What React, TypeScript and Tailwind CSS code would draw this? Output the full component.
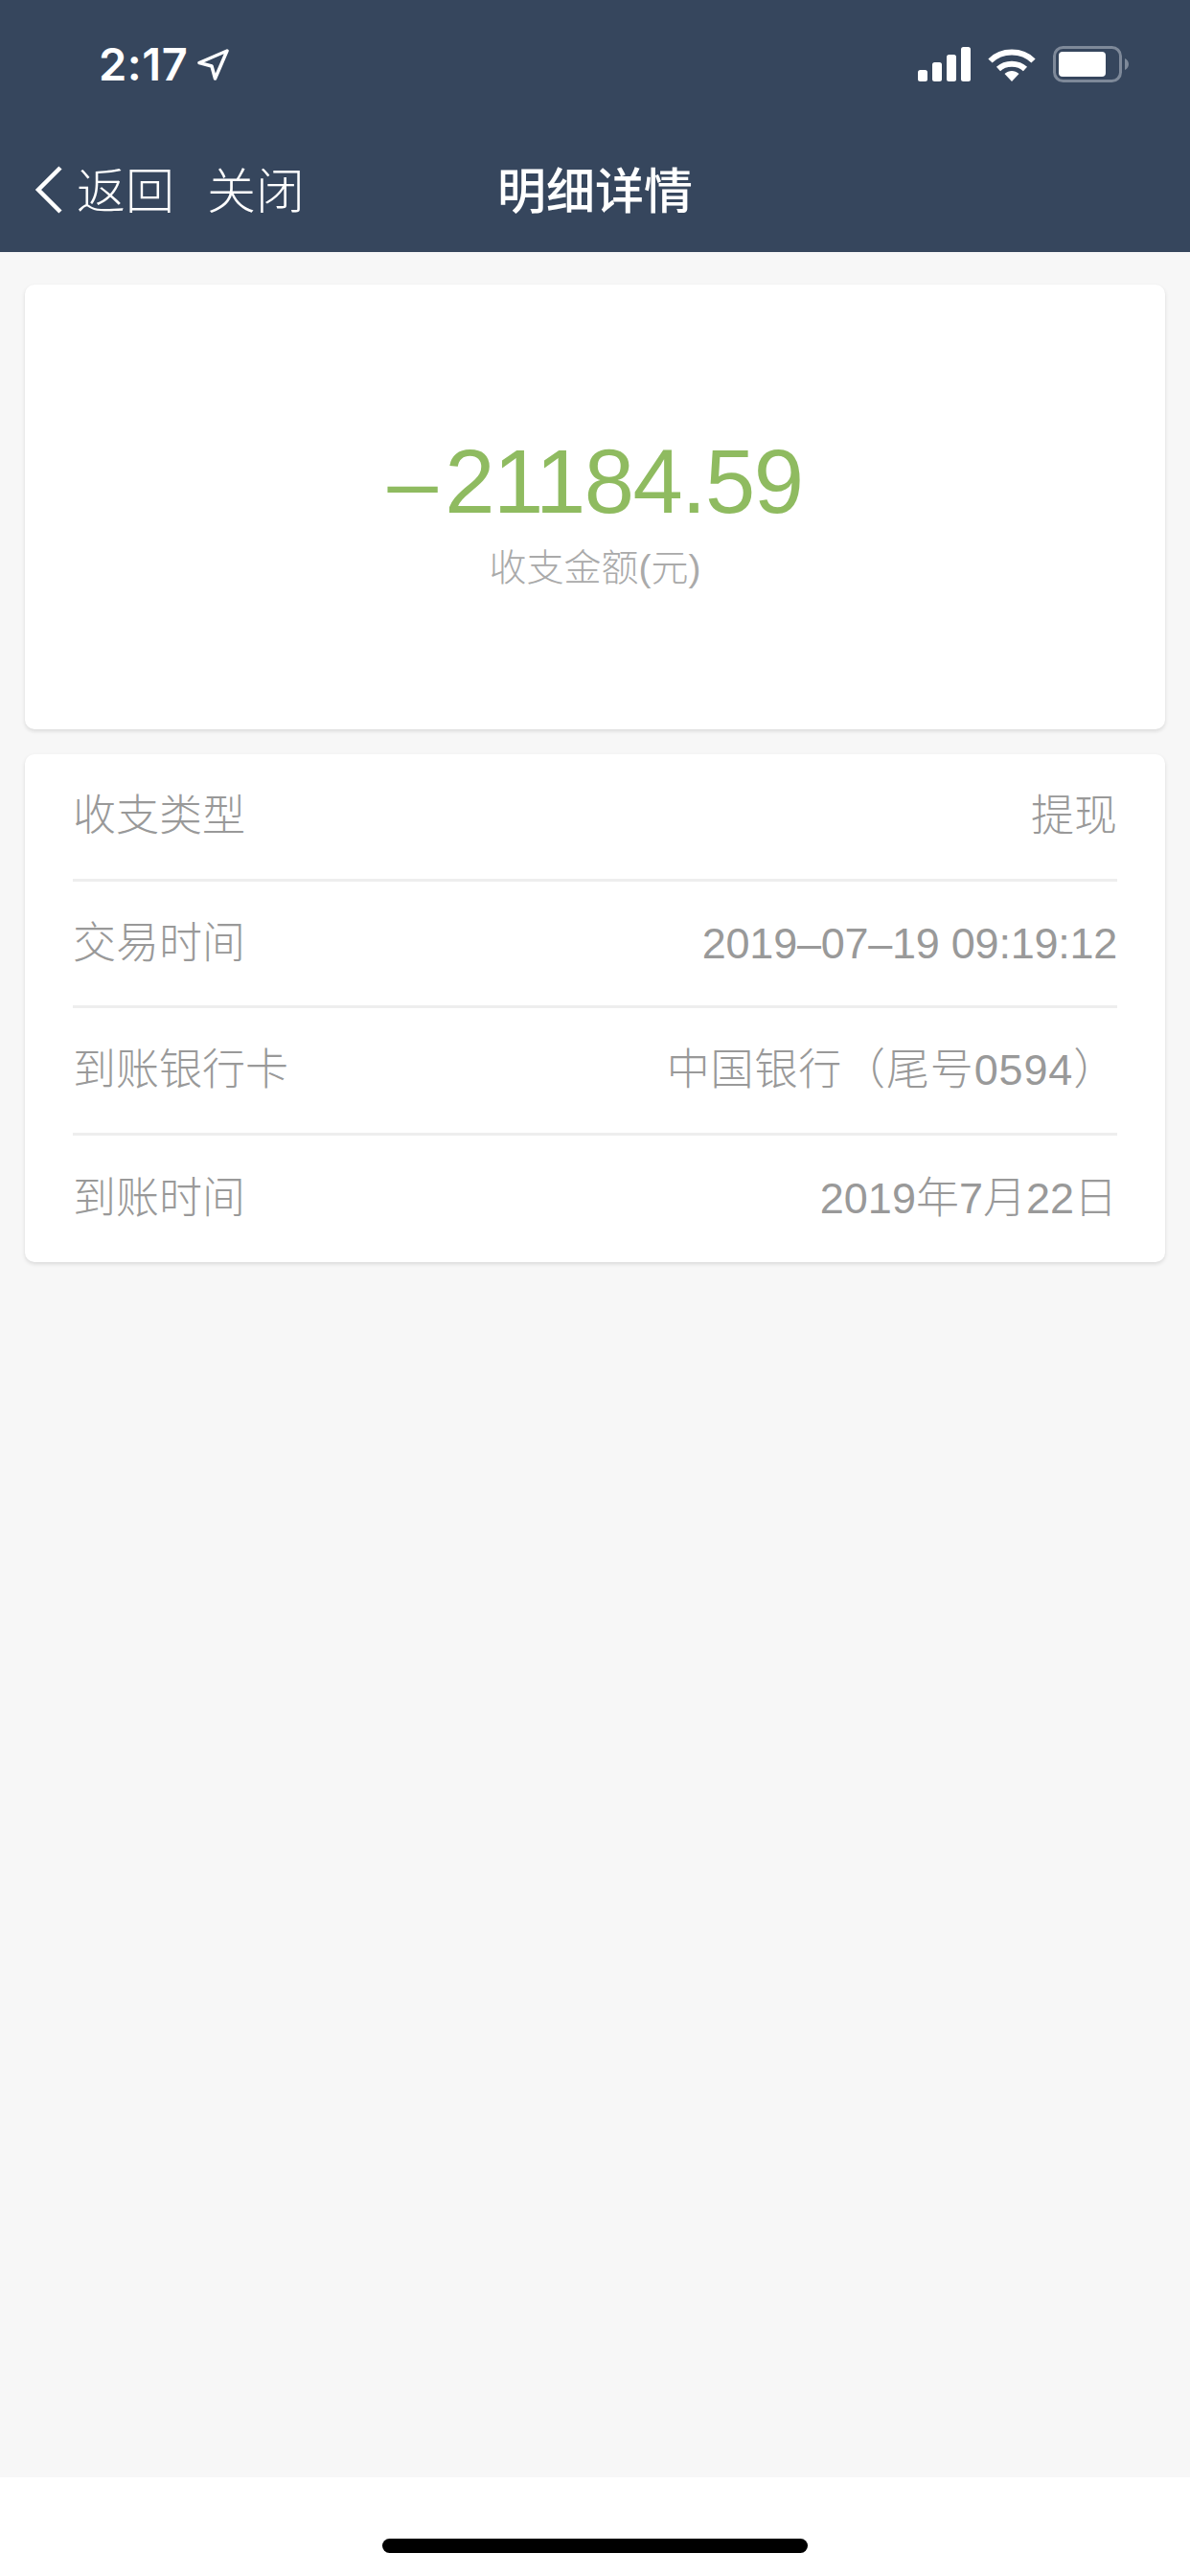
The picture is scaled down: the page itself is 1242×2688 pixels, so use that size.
const cjk = "font-['Helvetica','Liberation_Sans','Noto_Sans_CJK_SC',sans-serif]";

const rows = [
  { label: '收支类型', value: '提现', valueClass: '' },
  { label: '交易时间', value: '2019–07–19 09:19:12', valueClass: 'tracking-[-0.25px]' },
  { label: '到账银行卡', value: '中国银行（尾号0594）', valueClass: 'tracking-[0.85px]' },
  { label: '到账时间', value: '2019年7月22日', valueClass: '' },
];

function StatusIcons() {
  return (
    <div className="flex items-center">
      <svg width="55" height="36" viewBox="0 0 55 36" fill="#fff">
        <rect x="0" y="24" width="10" height="12" rx="2.5" />
        <rect x="15" y="16" width="10" height="20" rx="2.5" />
        <rect x="30" y="8" width="10" height="28" rx="2.5" />
        <rect x="45" y="0" width="10" height="36" rx="2.5" />
      </svg>
      <svg className="ml-[18px]" width="50" height="36" viewBox="0 0 50 36" fill="none">
        <path d="M2.5 14.5C14.5 2.5 35.5 2.5 47.5 14.5" stroke="#fff" strokeWidth="6" />
        <path d="M11 23C18.5 16 31.5 16 39 23" stroke="#fff" strokeWidth="6" />
        <path d="M17.5 28C22 24 28 24 32.5 28L25 36Z" fill="#fff" />
      </svg>
      <svg className="ml-[18px]" width="79" height="38" viewBox="0 0 79 38" fill="none">
        <rect x="1.5" y="1.5" width="69" height="35" rx="9" stroke="#7e8999" strokeWidth="3" />
        <rect x="6" y="6" width="49" height="26" rx="4" fill="#fff" />
        <path d="M75 13C77.5 14 79 16.5 79 19C79 21.5 77.5 24 75 25Z" fill="#7e8999" />
      </svg>
    </div>
  );
}

export default function App() {
  return (
    <div className={`flex h-[2688px] w-[1242px] flex-col bg-white ${cjk}`}>
      <header className="flex h-[263px] flex-col bg-[#36465d] text-white">
        <div className="flex h-[134px] items-center justify-between pl-[103px] pr-[64px]">
          <div className="flex items-center">
            <span className="font-['Inter',sans-serif] text-[47px] font-semibold tracking-[0.5px]">2:17</span>
            <svg className="ml-[10px]" width="33" height="33" viewBox="0 0 33 33" fill="none">
              <path d="M31 2L2 14.5L15 18L18.5 31Z" stroke="#fff" strokeWidth="3.5" strokeLinejoin="round" />
            </svg>
          </div>
          <StatusIcons />
        </div>
        <div className="relative flex h-[129px] items-start pl-[36px] pt-[35px] text-[51px] leading-[64px]">
          <svg className="mt-[4px]" width="30" height="50" viewBox="0 0 30 50" fill="none">
            <path d="M27 2L4 25L27 48" stroke="#fff" strokeWidth="4.5" />
          </svg>
          <span className="ml-[14px] font-light">返回</span>
          <span className="ml-[34px] font-light">关闭</span>
          <span className="ml-[201px] font-medium">明细详情</span>
        </div>
      </header>

      <main className="flex flex-1 flex-col gap-[26px] bg-[#f7f7f7] px-[26px] pt-[34px]">
        <section className="flex h-[464px] flex-col items-center rounded-[10px] bg-white pt-[146px] shadow-[0_2px_4px_rgba(0,0,0,0.12)]">
          <div className="text-[94px] leading-[120px] tracking-[-1.5px] text-[#8fbb60]">
            <span className="mr-[9px]">–</span>21184.59
          </div>
          <div className="mt-[5px] text-[39px] leading-[50px] font-light text-[#aaaaaa]">收支金额(元)</div>
        </section>

        <section className="rounded-[10px] bg-white px-[50px] shadow-[0_2px_4px_rgba(0,0,0,0.12)]">
          {rows.map((row, i) => (
            <div
              key={row.label}
              className={`flex h-[132.5px] items-center justify-between text-[45px] font-light text-[#999999] ${i < rows.length - 1 ? 'border-b-[3px] border-[#eeeeee]' : ''}`}
            >
              <span>{row.label}</span>
              <span className={row.valueClass}>{row.value}</span>
            </div>
          ))}
        </section>
      </main>

      <footer className="flex h-[103px] justify-center pt-[64px]">
        <div className="h-[15px] w-[444px] rounded-full bg-black" />
      </footer>
    </div>
  );
}
